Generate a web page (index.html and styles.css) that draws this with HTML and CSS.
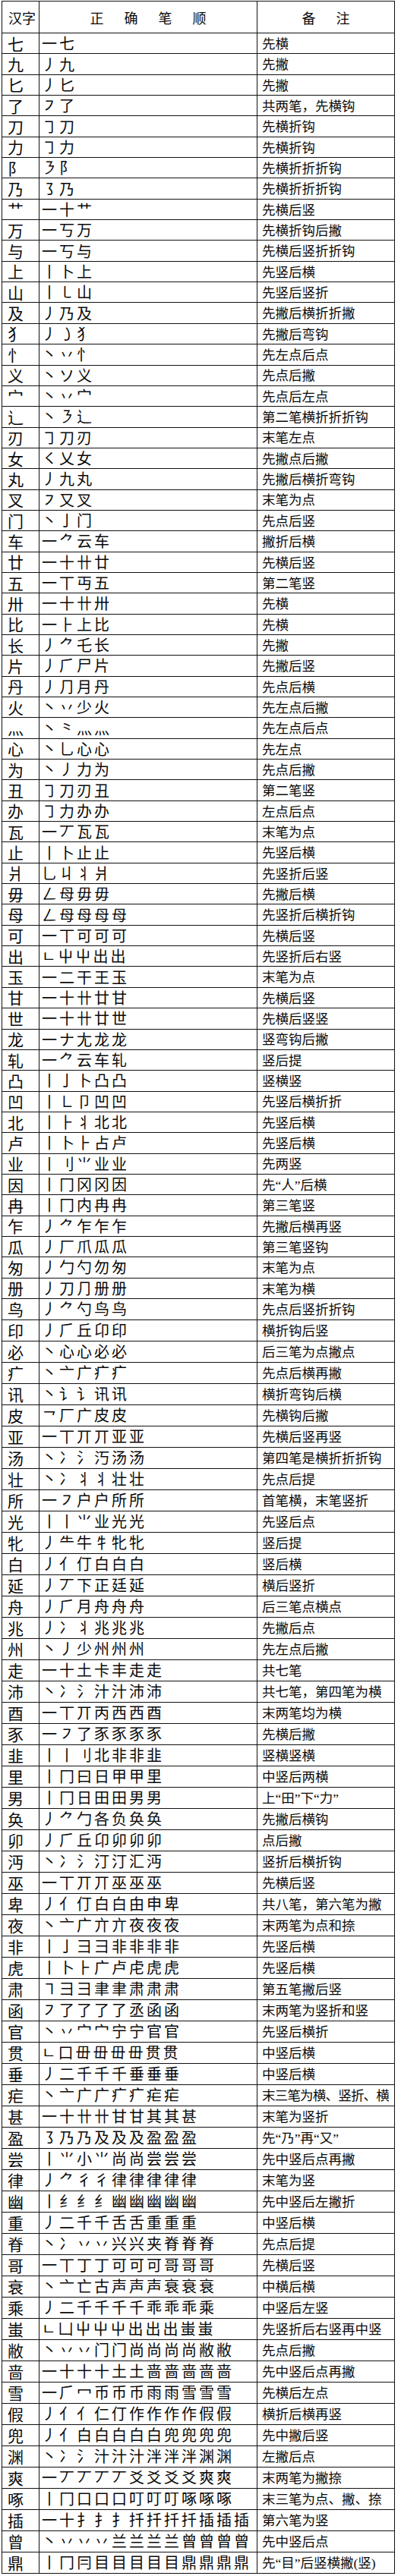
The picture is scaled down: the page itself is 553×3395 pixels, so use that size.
FILE: index.html
```html
<!DOCTYPE html>
<html lang="zh-CN">
<head>
<meta charset="utf-8">
<title>正确笔顺</title>
<link rel="stylesheet" href="styles.css">
</head>
<body>
<div class="sheet">
  <div class="row head">
    <div class="cell hchar">汉字</div>
    <div class="cell hwide"><span>正</span><span>确</span><span>笔</span><span>顺</span></div>
    <div class="cell hwide"><span>备</span><span>注</span></div>
  </div>
  <div class="row"><div class="cell char">七</div><div class="cell strokes">一七</div><div class="cell note">先横</div></div>
  <div class="row"><div class="cell char">九</div><div class="cell strokes">丿九</div><div class="cell note">先撇</div></div>
  <div class="row"><div class="cell char">匕</div><div class="cell strokes">丿匕</div><div class="cell note">先撇</div></div>
  <div class="row"><div class="cell char">了</div><div class="cell strokes">㇇了</div><div class="cell note">共两笔，先横钩</div></div>
  <div class="row"><div class="cell char">刀</div><div class="cell strokes">㇆刀</div><div class="cell note">先横折钩</div></div>
  <div class="row"><div class="cell char">力</div><div class="cell strokes">㇆力</div><div class="cell note">先横折钩</div></div>
  <div class="row"><div class="cell char">阝</div><div class="cell strokes">㇋阝</div><div class="cell note">先横折折折钩</div></div>
  <div class="row"><div class="cell char">乃</div><div class="cell strokes">㇌乃</div><div class="cell note">先横折折折钩</div></div>
  <div class="row"><div class="cell char">艹</div><div class="cell strokes">一十艹</div><div class="cell note">先横后竖</div></div>
  <div class="row"><div class="cell char">万</div><div class="cell strokes">一丂万</div><div class="cell note">先横折钩后撇</div></div>
  <div class="row"><div class="cell char">与</div><div class="cell strokes">一丂与</div><div class="cell note">先横后竖折折钩</div></div>
  <div class="row"><div class="cell char">上</div><div class="cell strokes">丨卜上</div><div class="cell note">先竖后横</div></div>
  <div class="row"><div class="cell char">山</div><div class="cell strokes">丨㇄山</div><div class="cell note">先竖后竖折</div></div>
  <div class="row"><div class="cell char">及</div><div class="cell strokes">丿乃及</div><div class="cell note">先撇后横折折撇</div></div>
  <div class="row"><div class="cell char">犭</div><div class="cell strokes">丿㇁犭</div><div class="cell note">先撇后弯钩</div></div>
  <div class="row"><div class="cell char">忄</div><div class="cell strokes">丶丷忄</div><div class="cell note">先左点后点</div></div>
  <div class="row"><div class="cell char">义</div><div class="cell strokes">丶ソ义</div><div class="cell note">先点后撇</div></div>
  <div class="row"><div class="cell char">宀</div><div class="cell strokes">丶丷宀</div><div class="cell note">先点后左点</div></div>
  <div class="row"><div class="cell char">辶</div><div class="cell strokes">丶㇋辶</div><div class="cell note">第二笔横折折折钩</div></div>
  <div class="row"><div class="cell char">刃</div><div class="cell strokes">㇆刀刃</div><div class="cell note">末笔左点</div></div>
  <div class="row"><div class="cell char">女</div><div class="cell strokes">㇛乂女</div><div class="cell note">先撇点后撇</div></div>
  <div class="row"><div class="cell char">丸</div><div class="cell strokes">丿九丸</div><div class="cell note">先撇后横折弯钩</div></div>
  <div class="row"><div class="cell char">叉</div><div class="cell strokes">㇇又叉</div><div class="cell note">末笔为点</div></div>
  <div class="row"><div class="cell char">门</div><div class="cell strokes">丶亅门</div><div class="cell note">先点后竖</div></div>
  <div class="row"><div class="cell char">车</div><div class="cell strokes">一⺈云车</div><div class="cell note">撇折后横</div></div>
  <div class="row"><div class="cell char">廿</div><div class="cell strokes">一十卄廿</div><div class="cell note">先横后竖</div></div>
  <div class="row"><div class="cell char">五</div><div class="cell strokes">一丅丏五</div><div class="cell note">第二笔竖</div></div>
  <div class="row"><div class="cell char">卅</div><div class="cell strokes">一十卄卅</div><div class="cell note">先横</div></div>
  <div class="row"><div class="cell char">比</div><div class="cell strokes">一⺊上比</div><div class="cell note">先横</div></div>
  <div class="row"><div class="cell char">长</div><div class="cell strokes">丿⺈乇长</div><div class="cell note">先撇</div></div>
  <div class="row"><div class="cell char">片</div><div class="cell strokes">丿⺁尸片</div><div class="cell note">先撇后竖</div></div>
  <div class="row"><div class="cell char">丹</div><div class="cell strokes">丿⺆月丹</div><div class="cell note">先点后横</div></div>
  <div class="row"><div class="cell char">火</div><div class="cell strokes">丶丷少火</div><div class="cell note">先左点后撇</div></div>
  <div class="row"><div class="cell char">灬</div><div class="cell strokes">丶⺀灬灬</div><div class="cell note">先左点后点</div></div>
  <div class="row"><div class="cell char">心</div><div class="cell strokes">丶乚心心</div><div class="cell note">先左点</div></div>
  <div class="row"><div class="cell char">为</div><div class="cell strokes">丶丿力为</div><div class="cell note">先点后撇</div></div>
  <div class="row"><div class="cell char">丑</div><div class="cell strokes">㇆刀刃丑</div><div class="cell note">第二笔竖</div></div>
  <div class="row"><div class="cell char">办</div><div class="cell strokes">㇆力办办</div><div class="cell note">左点后点</div></div>
  <div class="row"><div class="cell char">瓦</div><div class="cell strokes">一丆瓦瓦</div><div class="cell note">末笔为点</div></div>
  <div class="row"><div class="cell char">止</div><div class="cell strokes">丨卜止止</div><div class="cell note">先竖后横</div></div>
  <div class="row"><div class="cell char">爿</div><div class="cell strokes">乚丩丬爿</div><div class="cell note">先竖折后竖</div></div>
  <div class="row"><div class="cell char">毋</div><div class="cell strokes">ㄥ母毋毋</div><div class="cell note">先撇后横</div></div>
  <div class="row"><div class="cell char">母</div><div class="cell strokes">ㄥ母母母母</div><div class="cell note">先竖折后横折钩</div></div>
  <div class="row"><div class="cell char">可</div><div class="cell strokes">一丅可可可</div><div class="cell note">先横后竖</div></div>
  <div class="row"><div class="cell char">出</div><div class="cell strokes">ㄴ屮屮出出</div><div class="cell note">先竖折后右竖</div></div>
  <div class="row"><div class="cell char">玉</div><div class="cell strokes">一二干王玉</div><div class="cell note">末笔为点</div></div>
  <div class="row"><div class="cell char">甘</div><div class="cell strokes">一十卄廿甘</div><div class="cell note">先横后竖</div></div>
  <div class="row"><div class="cell char">世</div><div class="cell strokes">一十卄廿世</div><div class="cell note">先横后竖竖</div></div>
  <div class="row"><div class="cell char">龙</div><div class="cell strokes">一ナ尢龙龙</div><div class="cell note">竖弯钩后撇</div></div>
  <div class="row"><div class="cell char">轧</div><div class="cell strokes">一⺈云车轧</div><div class="cell note">竖后提</div></div>
  <div class="row"><div class="cell char">凸</div><div class="cell strokes">丨亅卜凸凸</div><div class="cell note">竖横竖</div></div>
  <div class="row"><div class="cell char">凹</div><div class="cell strokes">丨㇗卩凹凹</div><div class="cell note">先竖后横折折</div></div>
  <div class="row"><div class="cell char">北</div><div class="cell strokes">丨⺊丬北北</div><div class="cell note">先竖后横</div></div>
  <div class="row"><div class="cell char">卢</div><div class="cell strokes">丨卜⺊占卢</div><div class="cell note">先竖后横</div></div>
  <div class="row"><div class="cell char">业</div><div class="cell strokes">丨刂⺌业业</div><div class="cell note">先两竖</div></div>
  <div class="row"><div class="cell char">因</div><div class="cell strokes">丨冂冈冈因</div><div class="cell note">先“人”后横</div></div>
  <div class="row"><div class="cell char">冉</div><div class="cell strokes">丨冂内冉冉</div><div class="cell note">第三笔竖</div></div>
  <div class="row"><div class="cell char">乍</div><div class="cell strokes">丿⺈乍乍乍</div><div class="cell note">先撇后横再竖</div></div>
  <div class="row"><div class="cell char">瓜</div><div class="cell strokes">丿厂爪瓜瓜</div><div class="cell note">第三笔竖钩</div></div>
  <div class="row"><div class="cell char">匆</div><div class="cell strokes">丿勹勺勿匆</div><div class="cell note">末笔为点</div></div>
  <div class="row"><div class="cell char">册</div><div class="cell strokes">丿刀⺆册册</div><div class="cell note">末笔为横</div></div>
  <div class="row tall"><div class="cell char">鸟</div><div class="cell strokes">丿⺈勺鸟鸟</div><div class="cell note">先点后竖折折钩</div></div>
  <div class="row tall"><div class="cell char">印</div><div class="cell strokes">丿⺁丘卬印</div><div class="cell note">横折钩后竖</div></div>
  <div class="row tall"><div class="cell char">必</div><div class="cell strokes">丶心心必必</div><div class="cell note">后三笔为点撇点</div></div>
  <div class="row tall"><div class="cell char">疒</div><div class="cell strokes">丶亠广疒疒</div><div class="cell note">先点后横再撇</div></div>
  <div class="row tall"><div class="cell char">讯</div><div class="cell strokes">丶讠讠讯讯</div><div class="cell note">横折弯钩后横</div></div>
  <div class="row tall"><div class="cell char">皮</div><div class="cell strokes">㇖厂广皮皮</div><div class="cell note">先横钩后撇</div></div>
  <div class="row tall"><div class="cell char">亚</div><div class="cell strokes">一丅丌丌亚亚</div><div class="cell note">先横后竖再竖</div></div>
  <div class="row tall"><div class="cell char">汤</div><div class="cell strokes">丶冫氵汅汤汤</div><div class="cell note">第四笔是横折折折钩</div></div>
  <div class="row tall"><div class="cell char">壮</div><div class="cell strokes">丶冫丬丬壮壮</div><div class="cell note">先点后提</div></div>
  <div class="row tall"><div class="cell char">所</div><div class="cell strokes">一㇇户户所所</div><div class="cell note">首笔横，末笔竖折</div></div>
  <div class="row tall"><div class="cell char">光</div><div class="cell strokes">丨丨⺌业光光</div><div class="cell note">先竖后点</div></div>
  <div class="row tall"><div class="cell char">牝</div><div class="cell strokes">丿⺧牛牜牝牝</div><div class="cell note">竖后提</div></div>
  <div class="row tall"><div class="cell char">白</div><div class="cell strokes">丿亻仃白白白</div><div class="cell note">竖后横</div></div>
  <div class="row tall"><div class="cell char">延</div><div class="cell strokes">丿丆下正廷延</div><div class="cell note">横后竖折</div></div>
  <div class="row tall"><div class="cell char">舟</div><div class="cell strokes">丿⺁月舟舟舟</div><div class="cell note">后三笔点横点</div></div>
  <div class="row tall"><div class="cell char">兆</div><div class="cell strokes">丿冫丬兆兆兆</div><div class="cell note">先撇后点</div></div>
  <div class="row tall"><div class="cell char">州</div><div class="cell strokes">丶丿少州州州</div><div class="cell note">先左点后撇</div></div>
  <div class="row tall"><div class="cell char">走</div><div class="cell strokes">一十土卡丰走走</div><div class="cell note">共七笔</div></div>
  <div class="row tall"><div class="cell char">沛</div><div class="cell strokes">丶冫氵汁汁沛沛</div><div class="cell note">共七笔，第四笔为横</div></div>
  <div class="row tall"><div class="cell char">酉</div><div class="cell strokes">一丅丌丙西西酉</div><div class="cell note">末两笔均为横</div></div>
  <div class="row tall"><div class="cell char">豕</div><div class="cell strokes">一㇇了豕豕豕豕</div><div class="cell note">先横后撇</div></div>
  <div class="row tall"><div class="cell char">韭</div><div class="cell strokes">丨丨刂北非非韭</div><div class="cell note">竖横竖横</div></div>
  <div class="row tall"><div class="cell char">里</div><div class="cell strokes">丨冂曰日甲甲里</div><div class="cell note">中竖后两横</div></div>
  <div class="row tall"><div class="cell char">男</div><div class="cell strokes">丨冂日田田男男</div><div class="cell note">上“田”下“力”</div></div>
  <div class="row tall"><div class="cell char">奂</div><div class="cell strokes">丿⺈勹各负奂奂</div><div class="cell note">先撇后横钩</div></div>
  <div class="row tall"><div class="cell char">卯</div><div class="cell strokes">丿⺁丘卬卯卯卯</div><div class="cell note">点后撇</div></div>
  <div class="row tall"><div class="cell char">沔</div><div class="cell strokes">丶冫氵汀汀汇沔</div><div class="cell note">竖折后横折钩</div></div>
  <div class="row tall"><div class="cell char">巫</div><div class="cell strokes">一丅丌丌巫巫巫</div><div class="cell note">先横后竖</div></div>
  <div class="row tall"><div class="cell char">卑</div><div class="cell strokes">丿亻仃白白甶申卑</div><div class="cell note">共八笔，第六笔为撇</div></div>
  <div class="row tall"><div class="cell char">夜</div><div class="cell strokes">丶亠广亣亣夜夜夜</div><div class="cell note">末两笔为点和捺</div></div>
  <div class="row tall"><div class="cell char">非</div><div class="cell strokes">丨亅彐彐非非非非</div><div class="cell note">先竖后横</div></div>
  <div class="row tall"><div class="cell char">虎</div><div class="cell strokes">丨卜⺊广卢虍虎虎</div><div class="cell note">先竖后横</div></div>
  <div class="row tall"><div class="cell char">肃</div><div class="cell strokes">㇕⺕彐聿聿肃肃肃</div><div class="cell note">第五笔撇后竖</div></div>
  <div class="row tall"><div class="cell char">函</div><div class="cell strokes">㇇了了了了丞函函</div><div class="cell note">末两笔为竖折和竖</div></div>
  <div class="row tall"><div class="cell char">官</div><div class="cell strokes">丶丷宀宀宁宁官官</div><div class="cell note">先竖后横折</div></div>
  <div class="row tall"><div class="cell char">贯</div><div class="cell strokes">ㄴ口毌毌毌毌贯贯</div><div class="cell note">中竖后横</div></div>
  <div class="row tall"><div class="cell char">垂</div><div class="cell strokes">丿二千千千垂垂垂</div><div class="cell note">中竖后横</div></div>
  <div class="row tall"><div class="cell char">疟</div><div class="cell strokes">丶亠广广疒疒疟疟</div><div class="cell note tight">末三笔为横、竖折、横</div></div>
  <div class="row tall"><div class="cell char">甚</div><div class="cell strokes">一十卄卄甘甘其其甚</div><div class="cell note">末笔为竖折</div></div>
  <div class="row tall"><div class="cell char">盈</div><div class="cell strokes">㇌乃乃及及及盈盈盈</div><div class="cell note">先“乃”再“又”</div></div>
  <div class="row tall"><div class="cell char">尝</div><div class="cell strokes">丨⺌小⺌尚尚尝尝尝</div><div class="cell note">先中竖后点再撇</div></div>
  <div class="row tall"><div class="cell char">律</div><div class="cell strokes">丿⺈彳彳律律律律律</div><div class="cell note">末笔为竖</div></div>
  <div class="row tall"><div class="cell char">幽</div><div class="cell strokes">丨纟纟纟幽幽幽幽幽</div><div class="cell note">先中竖后左撇折</div></div>
  <div class="row tall"><div class="cell char">重</div><div class="cell strokes">丿二千千舌舌重重重</div><div class="cell note">中竖后横</div></div>
  <div class="row tall"><div class="cell char">脊</div><div class="cell strokes">丶冫丷丷兴兴夹脊脊脊</div><div class="cell note">先点后提</div></div>
  <div class="row tall"><div class="cell char">哥</div><div class="cell strokes">一丅丁丁可可可哥哥哥</div><div class="cell note">先横后竖</div></div>
  <div class="row tall"><div class="cell char">衰</div><div class="cell strokes">丶亠亡古声声声衰衰衰</div><div class="cell note">中横后横</div></div>
  <div class="row tall"><div class="cell char">乘</div><div class="cell strokes">丿二千千千千乖乖乖乘</div><div class="cell note">中竖后左竖</div></div>
  <div class="row tall"><div class="cell char">蚩</div><div class="cell strokes">ㄴ凵屮屮屮出出出蚩蚩</div><div class="cell note">先竖折后右竖再中竖</div></div>
  <div class="row tall"><div class="cell char">敝</div><div class="cell strokes">丶丷丷门门尚尚尚尚敝敝</div><div class="cell note">先点后撇</div></div>
  <div class="row tall"><div class="cell char">啬</div><div class="cell strokes">一十十十土土啬啬啬啬啬</div><div class="cell note">先中竖后点再撇</div></div>
  <div class="row tall"><div class="cell char">雪</div><div class="cell strokes">一⺁冖币币币雨雨雪雪雪</div><div class="cell note">先横后左点</div></div>
  <div class="row tall"><div class="cell char">假</div><div class="cell strokes">丿亻亻仁仃作作作作假假</div><div class="cell note">横折后横再竖</div></div>
  <div class="row tall"><div class="cell char">兜</div><div class="cell strokes">丿亻白白白白白兜兜兜兜</div><div class="cell note">先中撇后竖</div></div>
  <div class="row tall"><div class="cell char">渊</div><div class="cell strokes">丶冫氵汁汁汁泮泮泮渊渊</div><div class="cell note">左撇后点</div></div>
  <div class="row tall"><div class="cell char">爽</div><div class="cell strokes">一丆丆丆丆爻爻爻爻爽爽</div><div class="cell note">末两笔为撇捺</div></div>
  <div class="row tall"><div class="cell char">啄</div><div class="cell strokes">丨冂口口口叮叮叮啄啄啄</div><div class="cell note">末三笔为点、撇、捺</div></div>
  <div class="row tall"><div class="cell char">插</div><div class="cell strokes">一十扌扌扌扦扦扦扦插插插</div><div class="cell note">第六笔为竖</div></div>
  <div class="row tall"><div class="cell char">曾</div><div class="cell strokes">丶丷丷丷兰兰兰兰曾曾曾曾</div><div class="cell note">先中竖后点</div></div>
  <div class="row tall"><div class="cell char">鼎</div><div class="cell strokes">丨冂冃目目目目目鼎鼎鼎鼎</div><div class="cell note">先“目”后竖横撇(竖)</div></div>
</div>
</body>
</html>
```

FILE: styles.css
```css
html, body {
  margin: 0;
  padding: 0;
  background: #ffffff;
}

body {
  color: #0a0a0a;
  font-family: "Noto Sans CJK SC", sans-serif;
}

.sheet {
  width: fit-content;
  margin: 1px 0 0 2px;
  border-top: 1px solid #111;
  border-left: 1px solid #111;
}

.row {
  display: grid;
  grid-template-columns: 49px 287px 181px;
  height: 27.35px;
  box-sizing: border-box;
  border-bottom: 1px solid #111;
}

.row.tall {
  height: 28px;
}

.row.head {
  height: 42px;
}

.cell {
  display: flex;
  align-items: center;
  min-width: 0;
  border-right: 1px solid #111;
  white-space: nowrap;
  line-height: 1;
}

.hchar {
  font-size: 18px;
  padding-left: 8px;
}

.hwide {
  justify-content: center;
  gap: 27px;
  font-size: 18px;
}

.char {
  font-size: 21px;
  padding-left: 7px;
}

.strokes {
  font-size: 20px;
  letter-spacing: 3px;
  padding-left: 3px;
}

.note {
  font-family: "Liberation Serif", "Noto Sans CJK SC", sans-serif;
  font-size: 17.5px;
  padding-left: 6px;
  padding-top: 3px;
}

.note.tight {
  letter-spacing: -0.8px;
}
```
